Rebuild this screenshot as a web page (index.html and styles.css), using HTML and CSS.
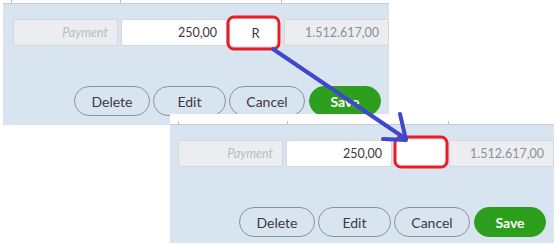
FILE: index.html
```html
<!DOCTYPE html>
<html>
<head>
    <title>payment edit</title>
    <link rel="stylesheet" href="styles.css">
</head>
<body>
    <div class="canvas">
        <div class="shot shot-top">
            <div class="ruler">
                <span class="tick t1"></span>
                <span class="tick t2"></span>
                <span class="tick t3"></span>
            </div>
            <div class="panel">
                <div class="fields">
                    <div class="field muted label">Payment</div>
                    <div class="field amount">250,00</div>
                    <div class="field code">R</div>
                    <div class="field muted total">1.512.617,00</div>
                </div>
                <div class="actions">
                    <button class="btn delete">Delete</button>
                    <button class="btn edit">Edit</button>
                    <button class="btn cancel">Cancel</button>
                    <button class="btn save">Save</button>
                </div>
            </div>
        </div>

        <div class="shot shot-bottom">
            <div class="ruler">
                <span class="tick t1"></span>
                <span class="tick t2"></span>
                <span class="tick t3"></span>
            </div>
            <div class="panel">
                <div class="fields">
                    <div class="field muted label">Payment</div>
                    <div class="field amount">250,00</div>
                    <div class="field code"></div>
                    <div class="field muted total">1.512.617,00</div>
                </div>
                <div class="actions">
                    <button class="btn delete">Delete</button>
                    <button class="btn edit">Edit</button>
                    <button class="btn cancel">Cancel</button>
                    <button class="btn save">Save</button>
                </div>
            </div>
        </div>

        <!-- hand drawn marks over both shots -->
        <svg class="marks" width="557" height="247" viewBox="0 0 557 247">
            <rect x="228" y="17" width="51" height="32" rx="6" class="ring"/>
            <rect x="395" y="137" width="52" height="30" rx="6" class="ring"/>
            <path d="M273 49 L406 139" class="arrow"/>
            <path d="M400 114 L406 140 L383 139" class="arrow"/>
        </svg>
    </div>
</body>
</html>
```

FILE: styles.css
```css
body {
    margin: 0;
    background: white;
    font-family: Lato, "Open Sans", sans-serif;
}

.canvas {
    position: relative;
    width: 557px;
    height: 247px;
    overflow: hidden;
}

.shot {
    position: absolute;
    display: flex;
    flex-direction: column;
    background: white;
}

.shot-top {
    left: 3px;
    top: 0;
    width: 386px;
}

.shot-bottom {
    left: 170px;
    top: 114px;
    width: 384px;
}

.ruler {
    position: relative;
    height: 3px;
    border-bottom: 1px solid rgb(200, 203, 208);
}

.shot-bottom .ruler {
    height: 10px;
}

.tick {
    position: absolute;
    bottom: 0;
    width: 1px;
    height: 3px;
    background: rgb(190, 192, 196);
}

.t1 { left: 8px; }
.t2 { left: 117px; }
.t3 { left: 278px; }

.panel {
    background: rgb(217, 228, 241);
    padding: 15px 0 0 10px;
    display: flex;
    flex-direction: column;
    gap: 40px;
}

.shot-top .panel {
    height: 106px;
}

.shot-bottom .panel {
    height: 103px;
    padding-left: 8px;
}

.fields {
    display: flex;
    gap: 3px;
}

.field {
    box-sizing: border-box;
    height: 27px;
    border: 1px solid rgb(212, 215, 220);
    border-radius: 2px;
    background: white;
    font-size: 12.5px;
    color: rgb(57, 58, 61);
    display: flex;
    align-items: center;
    justify-content: flex-end;
    padding-right: 9px;
}

.field.muted {
    background: rgb(235, 237, 241);
    color: rgb(141, 144, 150);
}

.field.label {
    width: 105px;
    font-style: italic;
    color: rgb(185, 188, 192);
}

.field.amount {
    width: 106px;
}

.field.code {
    width: 51px;
    padding-right: 0;
    justify-content: center;
    border-color: white;
    font-size: 13px;
}

.field.total {
    width: 105px;
}

.actions {
    display: flex;
    justify-content: flex-end;
    gap: 3px;
    padding-right: 8px;
}

.btn {
    height: 30px;
    border: 1px solid rgb(141, 144, 150);
    border-radius: 15px;
    background: transparent;
    color: rgb(57, 58, 61);
    font-family: Lato, "Open Sans", sans-serif;
    font-size: 14px;
    padding: 0;
}

.btn.delete { width: 76px; }
.btn.edit { width: 73px; }
.btn.cancel { width: 76px; margin-right: 1px; }

.btn.save {
    width: 72px;
    background: rgb(44, 160, 28);
    border-color: rgb(44, 160, 28);
    color: white;
    font-weight: bold;
}

.marks {
    position: absolute;
    left: 0;
    top: 0;
    pointer-events: none;
}

.ring {
    fill: none;
    stroke: rgb(237, 28, 36);
    stroke-width: 3;
}

.arrow {
    fill: none;
    stroke: rgb(63, 72, 204);
    stroke-width: 4;
    stroke-linecap: round;
    stroke-linejoin: round;
}
```
